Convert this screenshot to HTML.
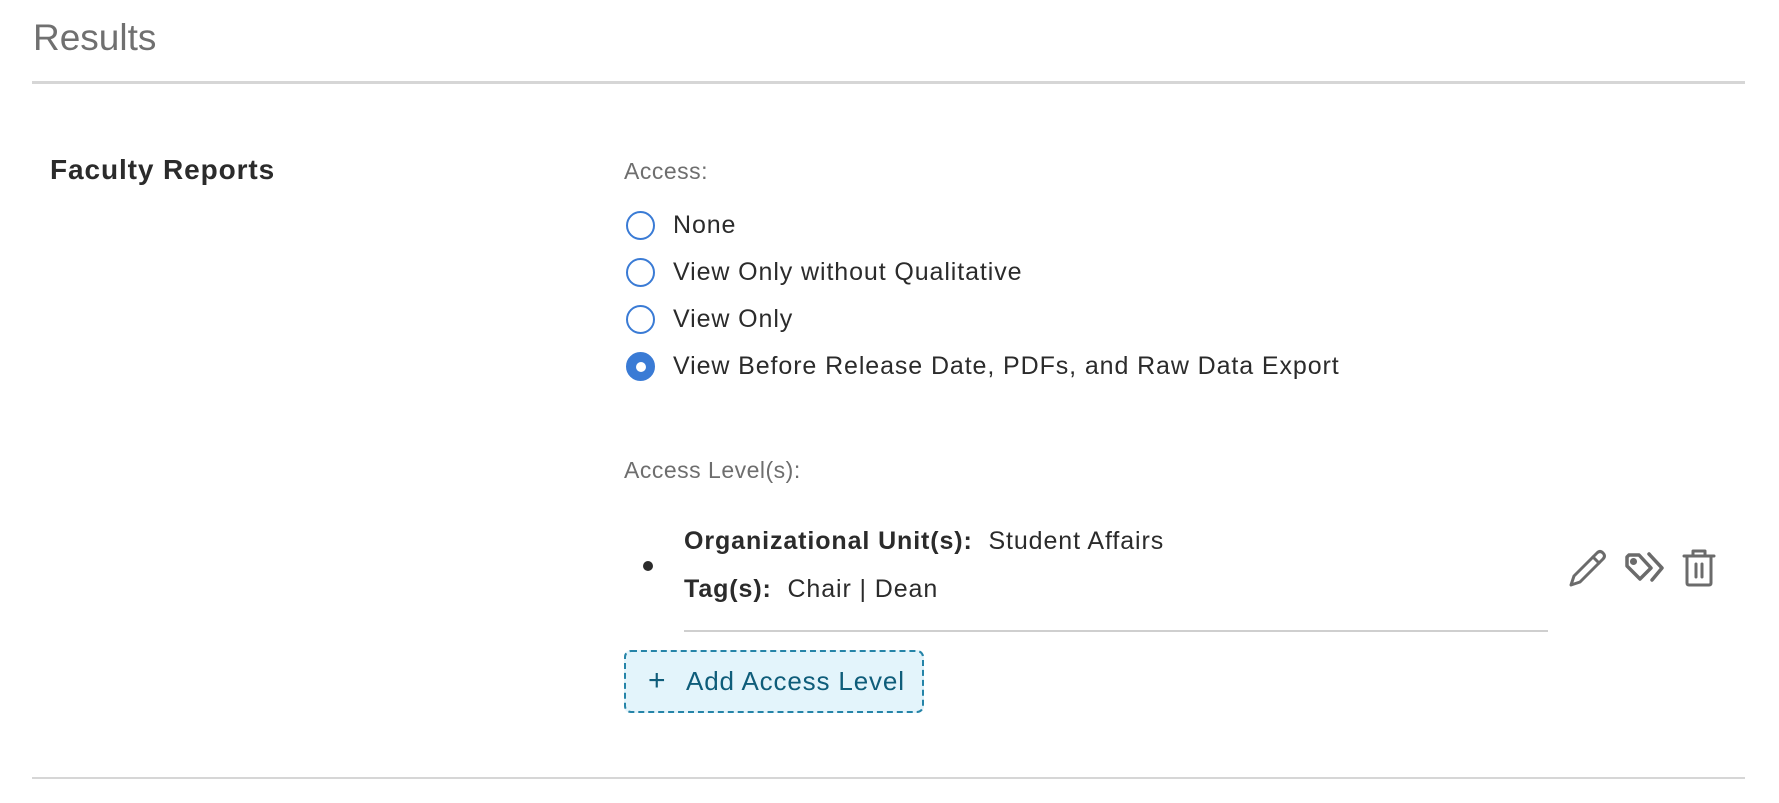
<!DOCTYPE html>
<html><head><meta charset="utf-8"><style>
*{margin:0;padding:0;box-sizing:border-box}
body{width:1779px;height:803px;background:#fff;position:relative;font-family:"Liberation Sans",Arial,sans-serif;color:#2b2b2b;overflow:hidden}
.abs{position:absolute;white-space:nowrap}
.hr{position:absolute;left:32px;width:1713px;background:#d6d6d6}
.radio{position:absolute;left:626px;width:29px;height:29px;border:2px solid #3a7bd5;border-radius:50%}
.rl{position:absolute;left:673px;font-size:25px;line-height:29px;letter-spacing:0.9px}
</style></head><body>
<div class="abs" style="left:33px;top:17px;font-size:37px;color:#707070">Results</div>
<div class="hr" style="top:81px;height:3px"></div>
<div class="abs" style="left:50px;top:154px;font-size:28px;font-weight:bold;color:#2b2b2b;letter-spacing:0.9px">Faculty Reports</div>
<div class="abs" style="left:624px;top:158px;font-size:23px;color:#6e6e6e;letter-spacing:0.5px">Access:</div>

<div class="radio" style="top:211px"></div><div class="rl" style="top:211px">None</div>
<div class="radio" style="top:258px"></div><div class="rl" style="top:258px">View Only without Qualitative</div>
<div class="radio" style="top:305px"></div><div class="rl" style="top:305px">View Only</div>
<div class="radio" style="top:352px;background:#3a7bd5;border-color:#3a7bd5"><div style="position:absolute;left:7.5px;top:7.5px;width:10px;height:10px;border-radius:50%;background:#fff"></div></div>
<div class="rl" style="top:352px">View Before Release Date, PDFs, and Raw Data Export</div>

<div class="abs" style="left:624px;top:457px;font-size:23px;color:#6e6e6e;letter-spacing:0.5px">Access Level(s):</div>
<div class="abs" style="left:643px;top:561px;width:10px;height:10px;border-radius:50%;background:#2b2b2b"></div>
<div class="abs" style="left:684px;top:527px;font-size:25px;letter-spacing:0.9px"><b>Organizational Unit(s):</b>&nbsp;&nbsp;Student Affairs</div>
<div class="abs" style="left:684px;top:575px;font-size:25px;letter-spacing:0.9px"><b>Tag(s):</b>&nbsp;&nbsp;Chair | Dean</div>
<div class="abs" style="left:684px;top:630px;width:864px;height:2px;background:#cfcfcf"></div>

<svg class="abs" style="left:1566px;top:547px" width="44" height="42" viewBox="0 0 44 42" fill="none" stroke="#6b6b6b" stroke-width="3" stroke-linejoin="round" stroke-linecap="round">
<path d="M5 38 L8 29 L31 6 Q34 3 37 6 Q40 9 37 12 L14 35 Z"/><path d="M27 10 L33 16"/></svg>
<svg class="abs" style="left:1623px;top:549px" width="46" height="40" viewBox="0 0 46 40" fill="none" stroke="#6b6b6b" stroke-width="3.5" stroke-linejoin="round" stroke-linecap="round">
<path d="M4 8 L4 17 L17 30 L28 19 L16 6 L6 6 Z"/><circle cx="10.5" cy="12.5" r="1.8" fill="#6b6b6b"/><path d="M26 5 L39 19 L29 31"/></svg>
<svg class="abs" style="left:1681px;top:547px" width="36" height="42" viewBox="0 0 36 42" fill="none" stroke="#6b6b6b" stroke-width="3" stroke-linejoin="round" stroke-linecap="round">
<path d="M3 9 H33"/><path d="M12 9 V4 H24 V9"/><path d="M6 9 V36 Q6 38 8 38 H28 Q30 38 30 36 V9"/><path d="M15 17 V30 M21 17 V30"/></svg>

<div class="abs" style="left:624px;top:650px;width:300px;height:63px;background:#e3f4fb;border:2px dashed #2584a8;border-radius:7px"></div>
<div class="abs" style="left:648px;top:664px;font-size:30px;color:#0f5d7a">+</div>
<div class="abs" style="left:686px;top:666px;font-size:26px;color:#0f5d7a;letter-spacing:0.85px">Add Access Level</div>

<div class="hr" style="top:777px;height:2px"></div>
</body></html>
